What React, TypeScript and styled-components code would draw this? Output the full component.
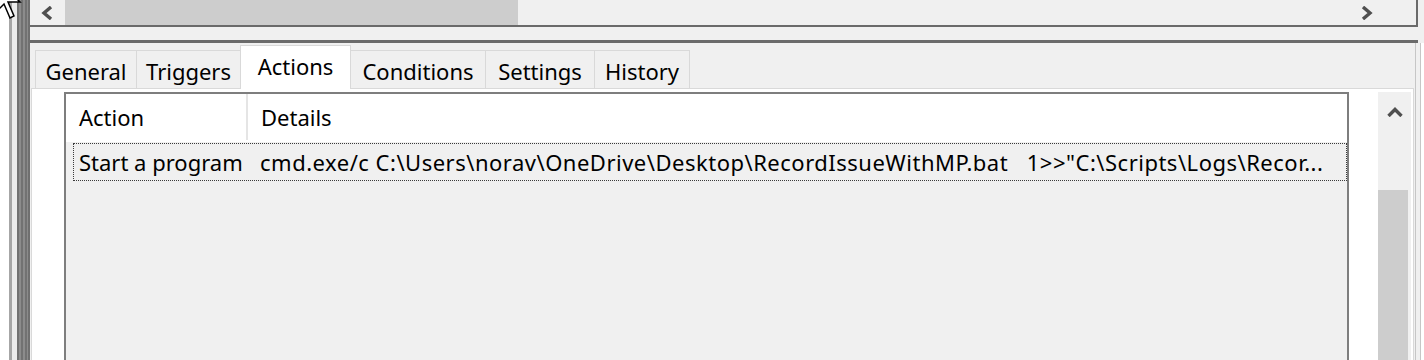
import React from "react";
import styled, { createGlobalStyle } from "styled-components";

const Global = createGlobalStyle`
  html, body { margin: 0; padding: 0; background: #ffffff; overflow: hidden; }
  body { font-family: "Noto Sans", "Open Sans", sans-serif; }
`;

const Screen = styled.div`
  position: relative;
  display: flex;
  width: 1424px;
  height: 360px;
  overflow: hidden;
  background: #ffffff;
`;

const Gutter = styled.div<{ $w: number; $bg: string }>`
  flex: 0 0 ${(p) => p.$w}px;
  background: ${(p) => p.$bg};
`;

const Splitter = styled.div`
  flex: 0 0 11px;
  background: repeating-linear-gradient(90deg, #727272 0 2px, #8c8c8c 2px 4px);
`;

const Window = styled.div`
  flex: 1;
  display: flex;
  flex-direction: column;
  background: #f0f0f0;
  border-left: 2px solid #6f6f6f;
  min-width: 0;
`;

const HScroll = styled.div`
  flex: 0 0 25px;
  display: flex;
  align-items: stretch;
  margin-right: 6px;
  border-right: 2px solid #6a6a6a;
  border-bottom: 2px solid #6a6a6a;
  background: #f0f0f0;
`;

const ArrowButton = styled.div<{ $w: number }>`
  flex: 0 0 ${(p) => p.$w}px;
  display: flex;
  align-items: center;
  justify-content: center;
`;

const HThumb = styled.div`
  flex: 0 0 453px;
  background: #cdcdcd;
`;

const Spacer = styled.div`
  flex: 1;
`;

const TopGap = styled.div`
  flex: 0 0 13px;
`;

const Rule = styled.div`
  flex: 0 0 3px;
  margin-right: 6px;
  background: #6b6b6b;
`;

const Body = styled.div`
  flex: 1;
  display: flex;
  min-height: 0;
`;

const TabArea = styled.div`
  flex: 1;
  display: flex;
  flex-direction: column;
  padding: 2px 0 0 1px;
  min-width: 0;
`;

const RightEdge = styled.div`
  flex: 0 0 10px;
  background: linear-gradient(
    90deg,
    #f0f0f0 0 1px,
    #c6c6c6 1px 2px,
    #f0f0f0 2px 6px,
    #c6c6c6 6px 7px,
    #ffffff 7px 10px
  );
`;

const TabStrip = styled.div`
  display: flex;
  align-items: flex-end;
  height: 44px;
  padding-left: 5px;
  position: relative;
  z-index: 1;
  margin-bottom: -1px;
`;

const Tab = styled.div<{ $w: number; $active?: boolean }>`
  box-sizing: border-box;
  width: ${(p) => p.$w}px;
  height: ${(p) => (p.$active ? 44 : 39)}px;
  margin-left: -1px;
  display: flex;
  align-items: center;
  justify-content: center;
  padding-top: ${(p) => (p.$active ? 0 : 3)}px;
  padding-bottom: ${(p) => (p.$active ? 4 : 0)}px;
  border: 1px solid #d9d9d9;
  border-bottom: ${(p) => (p.$active ? "none" : "1px solid #d9d9d9")};
  background: ${(p) => (p.$active ? "#ffffff" : "#f0f0f0")};
  font-size: 22px;
  color: #000;
  white-space: nowrap;
  position: relative;
  z-index: ${(p) => (p.$active ? 2 : 1)};
`;

const TabPanel = styled.div`
  flex: 1;
  display: flex;
  align-items: stretch;
  background: #ffffff;
  border: 1px solid #d9d9d9;
  border-bottom: none;
  padding: 3px 2px 0 32px;
  min-height: 0;
`;

const ListView = styled.div`
  flex: 0 0 1285px;
  box-sizing: border-box;
  display: flex;
  flex-direction: column;
  border: 2px solid #7e7e7e;
  border-bottom: none;
  background: #f0f0f0;
`;

const Header = styled.div`
  flex: 0 0 48px;
  display: flex;
  background: #ffffff;
`;

const HeaderCell = styled.div<{ $w?: number }>`
  box-sizing: border-box;
  ${(p) => (p.$w ? `flex: 0 0 ${p.$w}px; border-right: 2px solid #e5e5e5;` : "flex: 1;")}
  display: flex;
  align-items: center;
  padding-left: 13px;
  font-size: 22px;
  color: #000;
  height: 46px;
`;

const Row = styled.div`
  box-sizing: border-box;
  display: flex;
  align-items: center;
  height: 38px;
  margin: 1px 0 0 7px;
  border: 1px dotted #3a3a3a;
  background: #f0f0f0;
  font-size: 22px;
  color: #000;
  white-space: pre;
`;

const Cell = styled.div<{ $w?: number; $pad: number; $track?: number }>`
  ${(p) => (p.$w ? `flex: 0 0 ${p.$w}px;` : "flex: 1;")}
  box-sizing: border-box;
  padding-left: ${(p) => p.$pad}px;
  letter-spacing: ${(p) => p.$track ?? 0}px;
  overflow: hidden;
`;

const WhiteGap = styled.div`
  flex: 0 0 29px;
`;

const VScroll = styled.div`
  flex: 0 0 33px;
  display: flex;
  flex-direction: column;
  background: #f0f0f0;
`;

const VArrow = styled.div`
  flex: 0 0 40px;
  display: flex;
  align-items: center;
  justify-content: center;
`;

const VTrack = styled.div`
  flex: 0 0 58px;
`;

const VThumb = styled.div`
  flex: 1;
  margin-right: 3px;
  background: #cdcdcd;
`;

const Cursor = styled.svg`
  position: absolute;
  left: 0;
  top: 0;
  pointer-events: none;
`;

const Chevron = ({ dir }: { dir: "left" | "right" | "up" }) => {
  if (dir === "up") {
    return (
      <svg width="16" height="10" viewBox="0 0 16 10">
        <path d="M1.5 9 L8 2.5 L14.5 9" fill="none" stroke="#4f4f4f" strokeWidth="3.4" />
      </svg>
    );
  }
  const d = dir === "left" ? "M10 1 L3 7 L10 13" : "M3 1 L10 7 L3 13";
  return (
    <svg width="13" height="14" viewBox="0 0 13 14">
      <path d={d} fill="none" stroke="#4f4f4f" strokeWidth="3.4" />
    </svg>
  );
};

const tabs = [
  { label: "General", w: 102 },
  { label: "Triggers", w: 105 },
  { label: "Actions", w: 111, active: true },
  { label: "Conditions", w: 136 },
  { label: "Settings", w: 110 },
  { label: "History", w: 96 },
];

export default function App() {
  return (
    <>
      <Global />
      <Screen>
        <Gutter $w={9} $bg="#ffffff" />
        <Gutter $w={3} $bg="#a6a6a6" />
        <Gutter $w={5} $bg="#ececec" />
        <Splitter />
        <Window>
          <HScroll>
            <ArrowButton $w={35}>
              <Chevron dir="left" />
            </ArrowButton>
            <HThumb />
            <Spacer />
            <ArrowButton $w={100}>
              <Chevron dir="right" />
            </ArrowButton>
          </HScroll>
          <TopGap />
          <Rule />
          <Body>
            <TabArea>
              <TabStrip>
                {tabs.map((t) => (
                  <Tab key={t.label} $w={t.w} $active={t.active}>
                    {t.label}
                  </Tab>
                ))}
              </TabStrip>
              <TabPanel>
                <ListView>
                  <Header>
                    <HeaderCell $w={182}>Action</HeaderCell>
                    <HeaderCell>Details</HeaderCell>
                  </Header>
                  <Row>
                    <Cell $w={173} $pad={5}>
                      Start a program
                    </Cell>
                    <Cell $pad={13} $track={0.5}>
                      {'cmd.exe/c C:\\Users\\norav\\OneDrive\\Desktop\\RecordIssueWithMP.bat   1>>"C:\\Scripts\\Logs\\Recor...'}
                    </Cell>
                  </Row>
                </ListView>
                <WhiteGap />
                <VScroll>
                  <VArrow>
                    <Chevron dir="up" />
                  </VArrow>
                  <VTrack />
                  <VThumb />
                </VScroll>
              </TabPanel>
            </TabArea>
            <RightEdge />
          </Body>
        </Window>
        <Cursor width="24" height="22" viewBox="0 0 24 22">
          <path
            d="M-4 -22 L-4 12 L4 4 L10 18 L14 16 L8 2 L20 2 Z"
            fill="#ffffff"
            stroke="#000000"
            strokeWidth="1.5"
          />
        </Cursor>
      </Screen>
    </>
  );
}
